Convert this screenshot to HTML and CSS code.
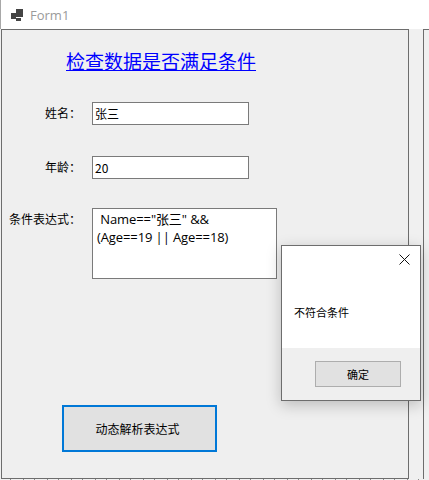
FILE: index.html
```html
<!DOCTYPE html>
<html lang="zh-CN">
<head>
  <meta charset="UTF-8" />
  <meta name="viewport" content="width=device-width, initial-scale=1.0"/>
  <title>Form1</title>
  <link rel="stylesheet" href="styles.css">
</head>
<body>
  <div class="titlebar">
    <svg class="app-icon" width="12" height="12" viewBox="0 0 12 12">
      <rect x="0" y="4" width="5" height="6" fill="#444"/>
      <rect x="5" y="0" width="7" height="8" fill="#444"/>
      <rect x="5" y="9" width="5" height="3" fill="#444"/>
    </svg>
    <span class="app-name">Form1</span>
  </div>

  <div class="desk">
    <div class="form">
      <a class="heading" href="#">检查数据是否满足条件</a>

      <div class="row row-name">
        <label class="field-label">姓名：</label>
        <input class="field" type="text" value="张三" />
      </div>
      <div class="row row-age">
        <label class="field-label">年龄：</label>
        <input class="field" type="text" value="20" />
      </div>
      <div class="row row-expr">
        <label class="field-label">条件表达式：</label>
        <div class="field expr"> Name=="张三" &amp;&amp;<br>(Age==19 || Age==18)</div>
      </div>

      <button class="run">动态解析表达式</button>
    </div>
    <div class="next-panel"></div>
  </div>
  <div class="cut-text"></div>

  <div class="msgbox">
    <div class="msg-body">
      <svg class="msg-close" width="11" height="11" viewBox="0 0 11 11">
        <path d="M0.5 0.5L10.5 10.5M10.5 0.5L0.5 10.5" stroke="#111" stroke-width="1" fill="none"/>
      </svg>
      <div class="msg-text">不符合条件</div>
    </div>
    <div class="msg-foot">
      <button class="msg-ok">确定</button>
    </div>
  </div>
</body>
</html>
```

FILE: styles.css
```css
html, body { margin: 0; height: 480px; overflow: hidden; }
body { background: #f0f0f0; font-family: "Noto Sans CJK SC", "Open Sans", sans-serif; font-size: 12px; color: #000; position: relative; }

.titlebar { height: 29px; background: #fff; border-left: 1px solid #a8a8a8; display: flex; align-items: center; padding-left: 10px; gap: 7px; box-sizing: border-box; }
.app-name { font-family: "Open Sans", sans-serif; font-size: 13px; color: #9a9a9a; }

.desk { display: flex; height: 450px; padding-left: 1px; box-sizing: border-box; }
.form { width: 409px; height: 450px; box-sizing: border-box; border: 1px solid #6d6d6d; background: #efefef; padding-top: 17px; }
.next-panel { width: 6px; height: 450px; margin-left: 14px; border-left: 1px solid #6d6d6d; border-top: 1px solid #6d6d6d; box-sizing: border-box; flex: none; }
.cut-text { height: 1px; background: repeating-linear-gradient(90deg, #f0f0f0 0, #f0f0f0 10px, #8a8a8a 10px, #8a8a8a 11px, #f0f0f0 11px, #f0f0f0 23px, #8a8a8a 23px, #8a8a8a 24px); }

.heading { display: block; width: 190px; margin-left: 64px; font-size: 19px; line-height: 28px; color: #0000ff; text-decoration: underline; white-space: nowrap; }

.row { display: flex; align-items: flex-start; gap: 11px; }
.row-name { margin-top: 27px; }
.row-age { margin-top: 31px; }
.row-expr { margin-top: 29px; }

.field-label { width: 79px; text-align: right; line-height: 22px; font-size: 12px; white-space: nowrap; }
.field { box-sizing: border-box; width: 157px; height: 23px; margin: 0; padding: 0 2px; border: 1px solid #7a7a7a; background: #fff; font-family: inherit; font-size: 12px; line-height: 21px; color: #000; outline: none; }
.expr { width: 185px; height: 71px; padding: 1px 4px; font-family: "Open Sans", "Noto Sans CJK SC", sans-serif; font-size: 13px; letter-spacing: -0.1px; line-height: 18px; white-space: pre-wrap; }

.run { display: block; box-sizing: border-box; width: 155px; height: 47px; margin: 126px 0 0 60px; padding: 0 4px 0 0; border: 2px solid #0078d7; background: #e1e1e1; font-family: inherit; font-size: 12px; color: #000; }

.msgbox { position: absolute; left: 281px; top: 245px; width: 140px; height: 156px; box-sizing: border-box; border: 1px solid #6d6d6d; background: #fff; display: flex; flex-direction: column; box-shadow: 0 4px 14px rgba(0, 0, 0, 0.22); }
.msg-body { flex: 1; position: relative; padding: 58px 0 0 12px; box-sizing: border-box; }
.msg-close { position: absolute; top: 8px; right: 10px; }
.msg-text { font-size: 11px; line-height: 16px; }
.msg-foot { height: 52px; background: #efefef; display: flex; justify-content: flex-end; align-items: flex-start; padding: 13px 19px 0 0; box-sizing: border-box; }
.msg-ok { box-sizing: border-box; width: 86px; height: 26px; padding: 0; border: 1px solid #adadad; background: #e1e1e1; font-family: inherit; font-size: 11px; color: #000; }
```
